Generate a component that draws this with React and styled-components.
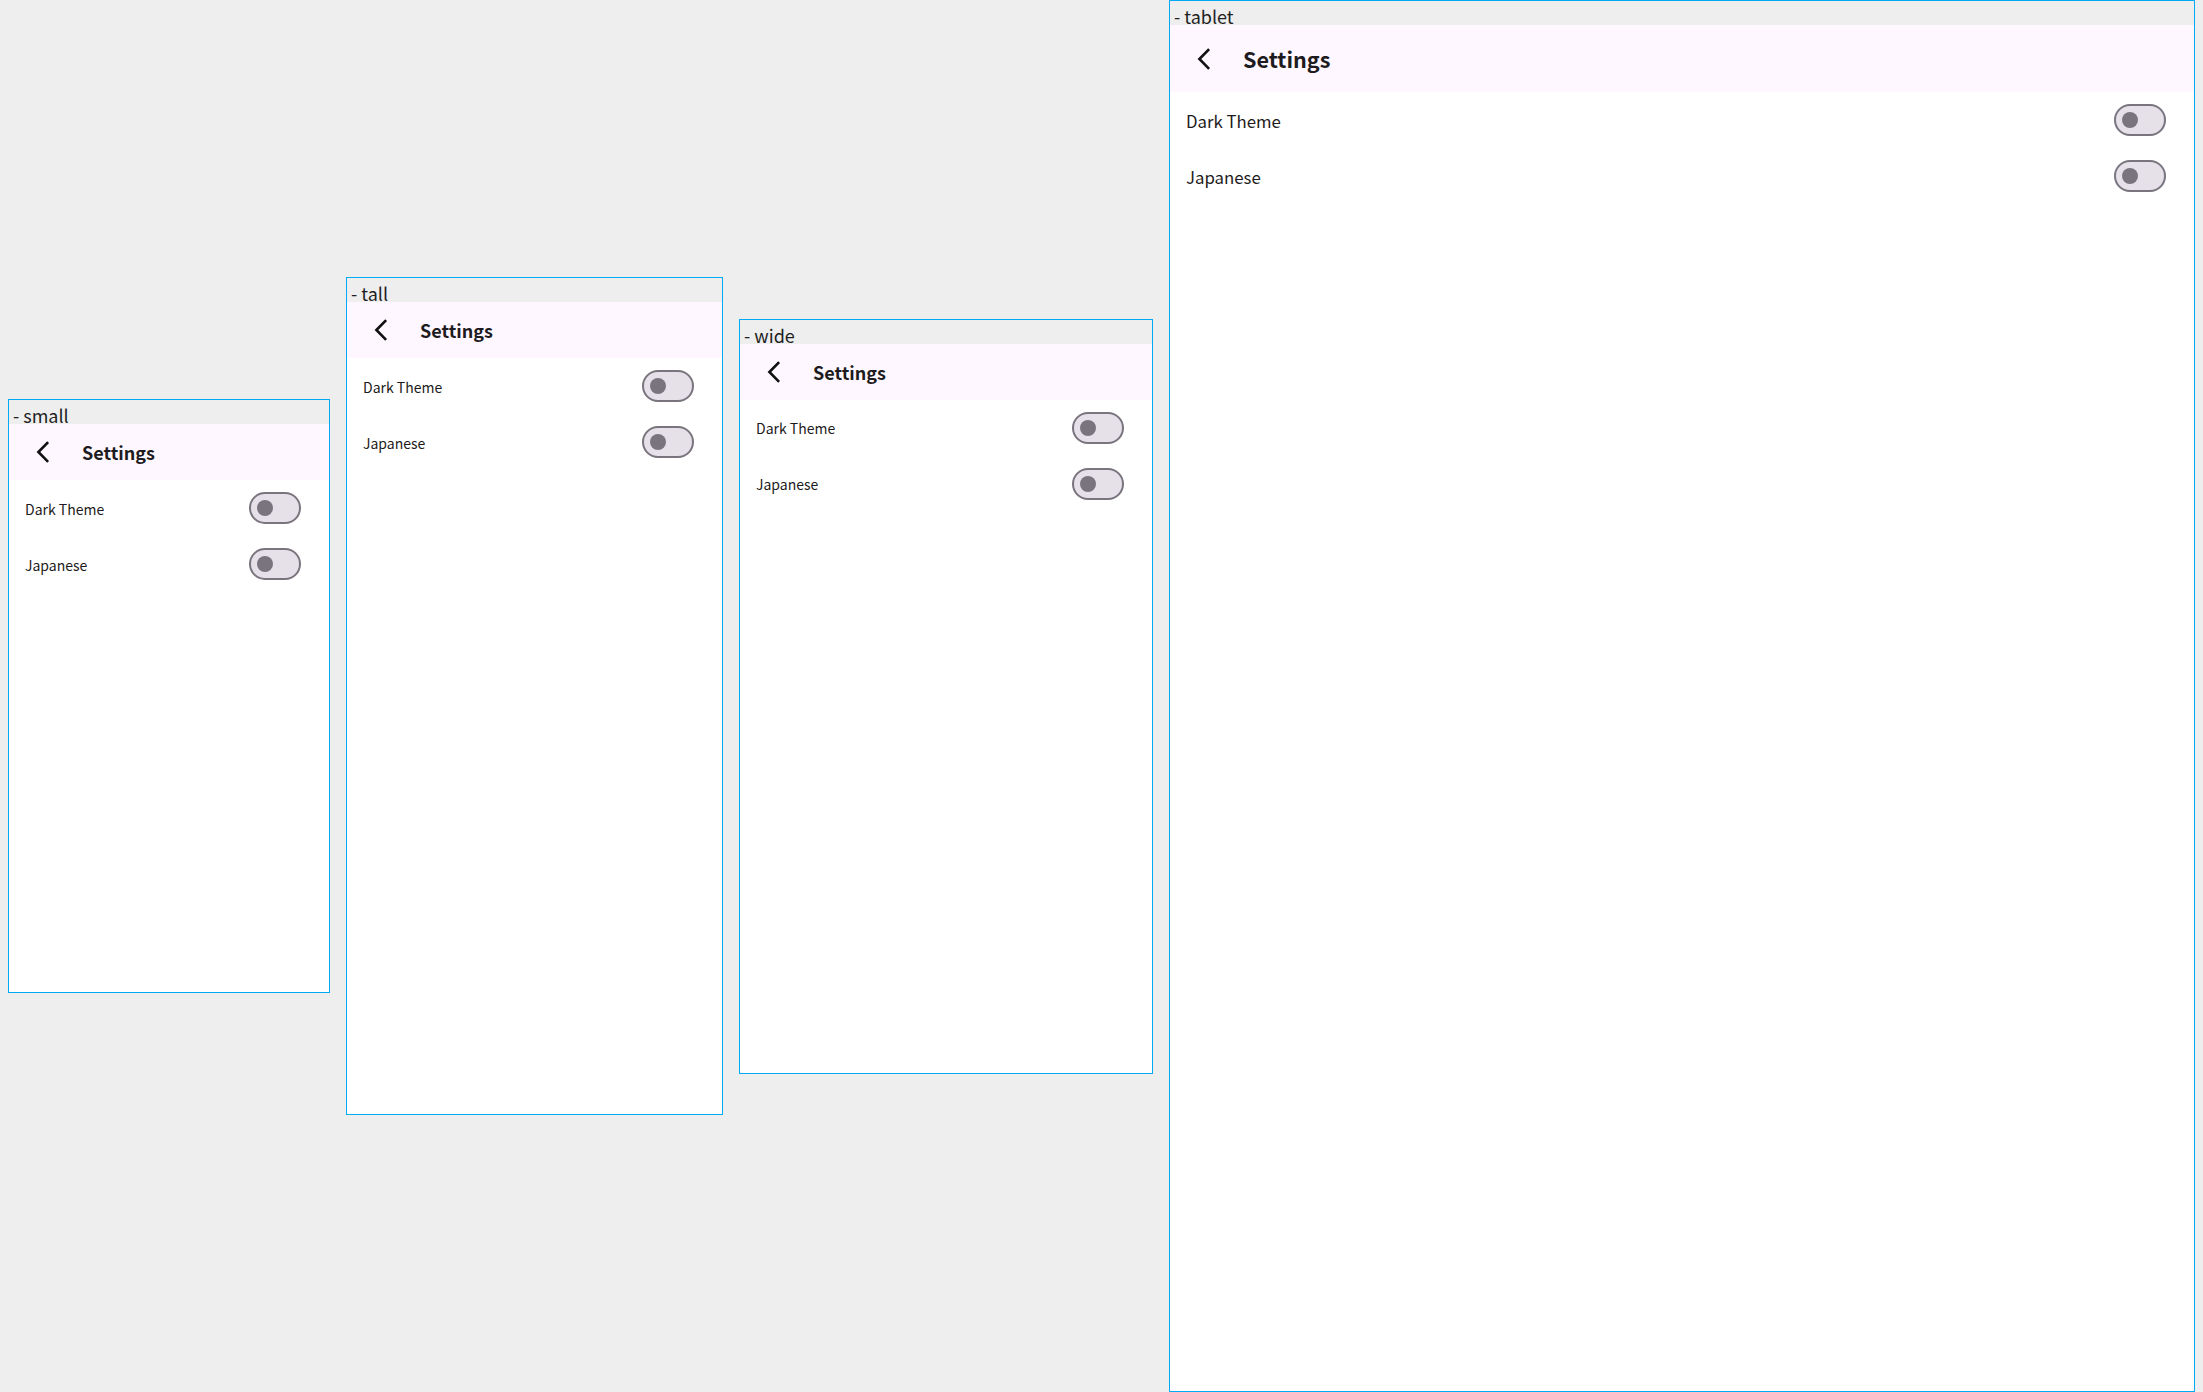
import React from "react";
import styled, { createGlobalStyle } from "styled-components";

const GlobalStyle = createGlobalStyle`
  body {
    margin: 0;
    background: #eeeeee;
    font-family: "Noto Sans CJK JP", "Noto Sans", sans-serif;
    color: #1d1b20;
  }
`;

const devices = [
  { name: "small", width: 320, height: 568, scale: 1, bar: 56 },
  { name: "tall", width: 375, height: 812, scale: 1, bar: 56 },
  { name: "wide", width: 412, height: 729, scale: 1, bar: 56 },
  { name: "tablet", width: 1024, height: 1366, scale: 1.2, bar: 67 },
];

const settings = ["Dark Theme", "Japanese"];

const Stage = styled.div`
  display: flex;
  align-items: center;
  gap: 16px;
  height: 1392px;
  padding: 0 8px;
  box-sizing: border-box;
`;

const Frame = styled.div`
  flex: none;
  display: flex;
  flex-direction: column;
  border: 1px solid #03a9f4;
`;

const Label = styled.div`
  height: 24px;
  box-sizing: border-box;
  padding: 3px 0 0 4px;
  background: #eeeeee;
  font-size: 18px;
  line-height: 24px;
  color: #1f1f1f;
  overflow: hidden;
  white-space: nowrap;
`;

const Screen = styled.div`
  width: ${(p) => p.$w}px;
  height: ${(p) => p.$h}px;
  background: #ffffff;
  display: flex;
  flex-direction: column;
  overflow: hidden;
`;

const AppBar = styled.header`
  height: ${(p) => p.$h}px;
  flex: none;
  display: flex;
  align-items: center;
  background: #fef7ff;
`;

const BackIcon = styled.svg`
  width: 16px;
  height: 24px;
  margin-left: 26px;
  flex: none;
`;

const Title = styled.h1`
  margin: 0 0 0 31px;
  font-size: ${(p) => 18 * p.$scale}px;
  font-weight: 700;
  color: #1d1b20;
  line-height: 1;
`;

const Row = styled.div`
  height: 56px;
  flex: none;
  display: flex;
  align-items: center;
  justify-content: space-between;
  padding: 1px 28px 0 16px;
  box-sizing: border-box;
`;

const RowText = styled.span`
  font-size: ${(p) => 14 * p.$scale}px;
  color: #1d1b20;
`;

const Toggle = styled.div`
  position: relative;
  width: 52px;
  height: 32px;
  margin-top: -1px;
  box-sizing: border-box;
  border: 2px solid #79747e;
  border-radius: 16px;
  background: #e6e0e9;

  &::after {
    content: "";
    position: absolute;
    left: 6px;
    top: 6px;
    width: 16px;
    height: 16px;
    border-radius: 50%;
    background: #79747e;
  }
`;

const Device = ({ device }) => (
  <Frame>
    <Label>- {device.name}</Label>
    <Screen $w={device.width} $h={device.height}>
      <AppBar $h={device.bar}>
        <BackIcon viewBox="0 0 16 24">
          <path
            d="M12.2 3 L3.4 12 L12.2 21"
            fill="none"
            stroke="#111111"
            strokeWidth="2.6"
            strokeLinecap="square"
            strokeLinejoin="miter"
          />
        </BackIcon>
        <Title $scale={device.scale}>Settings</Title>
      </AppBar>
      {settings.map((s) => (
        <Row key={s}>
          <RowText $scale={device.scale}>{s}</RowText>
          <Toggle />
        </Row>
      ))}
    </Screen>
  </Frame>
);

export default function App() {
  return (
    <>
      <GlobalStyle />
      <Stage>
        {devices.map((d) => (
          <Device key={d.name} device={d} />
        ))}
      </Stage>
    </>
  );
}
